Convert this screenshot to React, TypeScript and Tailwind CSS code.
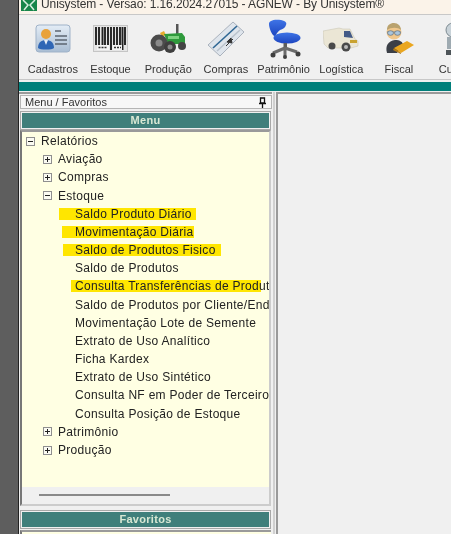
import React from "react";

const font = { fontFamily: '"Liberation Sans", Arial, sans-serif' };

const CardIcon = () => (
  <svg width="36" height="30" viewBox="0 0 36 30">
    <defs>
      <linearGradient id="card" x1="0" y1="0" x2="0" y2="1">
        <stop offset="0" stopColor="#e4edf6" />
        <stop offset="1" stopColor="#a9bdd3" />
      </linearGradient>
    </defs>
    <rect x="1" y="1" width="34" height="27" rx="3" fill="url(#card)" stroke="#9fb2c8" />
    <circle cx="11" cy="10" r="5" fill="#e9a23a" />
    <path d="M3 24c0-6 4-8 8-8s8 2 8 8c-2 2-14 2-16 0z" fill="#2f66b5" />
    <path d="M9 16l2 5 2-5z" fill="#e8eef5" />
    <path d="M20 7h6M20 12h12M20 16h12M20 20h12" stroke="#5c6672" strokeWidth="1.6" />
  </svg>
);

const BarcodeIcon = () => (
  <svg width="35" height="27" viewBox="0 0 35 27">
    <rect x="0.5" y="0.5" width="34" height="26" fill="#e5e5e5" stroke="#c5c5c5" />
    <path d="M3 2v18M6 2v18M9.5 2v23M12 2v18M15 2v18M18 2v23M21 2v18M24 2v18M27 2v18M29.500 2v23M32 2v18" stroke="#222" strokeWidth="1.9" />
    <rect x="4" y="20" width="12" height="5" fill="#f4f4f4" />
    <rect x="19.500" y="20" width="9.500" height="5" fill="#f4f4f4" />
    <path d="M5.500 22.500h9M21 22.500h7" stroke="#333" strokeWidth="1.6" strokeDasharray="2 1" />
  </svg>
);

const TractorIcon = () => (
  <svg width="36" height="30" viewBox="0 0 36 30">
    <rect x="26" y="0" width="2.500" height="11" fill="#555" />
    <path d="M10 9l4-2 2 4-4 2z" fill="#e7ad2f" />
    <path d="M14 10l18-1 3 4v7H18z" fill="#2f9a3c" />
    <path d="M18 12h11v3H18z" fill="#7ed27f" />
    <circle cx="9" cy="19" r="8.500" fill="#4b4b4b" />
    <circle cx="9" cy="19" r="3.500" fill="#8a8a8a" />
    <circle cx="20" cy="23" r="6" fill="#3e3e3e" />
    <circle cx="20" cy="23" r="2.500" fill="#8a8a8a" />
    <circle cx="32" cy="22" r="4" fill="#444" />
  </svg>
);

const TicketIcon = () => (
  <svg width="38" height="36" viewBox="0 0 38 36">
    <path d="M1 24L26 1l11 10-24 24z" fill="#dfe5ec" stroke="#aab2bd" />
    <path d="M6 27L30 5" stroke="#2f6794" strokeWidth="1.600" />
    <path d="M10 30L33 9" stroke="#b9c2cc" strokeWidth="1.500" />
    <path d="M19 25l7-7M24 17l1 5-5-1z" fill="#333" stroke="#333" strokeWidth="1" />
  </svg>
);

const ChairIcon = () => (
  <svg width="34" height="40" viewBox="0 0 34 40">
    <defs>
      <linearGradient id="seat" x1="0" y1="0" x2="0" y2="1">
        <stop offset="0" stopColor="#3f74e6" />
        <stop offset="1" stopColor="#1c45c0" />
      </linearGradient>
    </defs>
    <path d="M2 5c0-3 4-5 12-4 5 1 6 3 5 5-1 3-3 4-6 5-3 2-4 5-5 6-3 0-6-8-6-12z" fill="url(#seat)" />
    <path d="M12 15l2 6" stroke="#3565c8" strokeWidth="3" />
    <ellipse cx="20" cy="19" rx="13.500" ry="5.500" fill="url(#seat)" />
    <rect x="16.500" y="24" width="3.500" height="7" fill="#5c5c5c" />
    <path d="M18 29L6 34M18 29l12 4M18 29l0 8" stroke="#6b6b6b" strokeWidth="3" />
    <circle cx="6" cy="36" r="2.500" fill="#3f3f3f" />
    <circle cx="18" cy="38" r="2" fill="#3f3f3f" />
    <circle cx="31" cy="35" r="2.500" fill="#3f3f3f" />
  </svg>
);

const TruckIcon = () => (
  <svg width="36" height="26" viewBox="0 0 36 26">
    <path d="M0 5l16-3 4 1 7 0 5 10 3 2v5l-7 2H5l-4-4z" fill="#ebe6d5" stroke="#c5c0ae" strokeWidth="0.500" />
    <path d="M21 5h6l3 7-9-1z" fill="#435a86" />
    <path d="M27 14h7v3h-7z" fill="#c9a22f" />
    <circle cx="9" cy="20" r="3.500" fill="#4a4a4a" />
    <circle cx="23" cy="21" r="4.500" fill="#4a4a4a" />
    <circle cx="23" cy="21" r="2" fill="#bbb" />
  </svg>
);

const FiscalIcon = () => (
  <svg width="30" height="31" viewBox="0 0 30 31">
    <path d="M3 30c-2-7 1-12 8-13 5 0 8 2 8 5l-6 8z" fill="#3b3f47" />
    <circle cx="10" cy="9" r="7.500" fill="#f0c78c" />
    <path d="M3 7c0-5 3-7 7-7s7 3 7 7c-3-3-10-3-14 0z" fill="#b9a26e" />
    <path d="M3 9h14" stroke="#7d8d9c" strokeWidth="1" />
    <ellipse cx="6.500" cy="10" rx="3" ry="2.300" fill="#a9c5dc" stroke="#55606b" strokeWidth="0.600" />
    <ellipse cx="13.500" cy="10" rx="3" ry="2.300" fill="#a9c5dc" stroke="#55606b" strokeWidth="0.600" />
    <path d="M10 25l13-7 7 4-13 8z" fill="#eaa61f" />
    <path d="M10 25l7 5 0 1-8-4z" fill="#b27a15" />
  </svg>
);

const RobotIcon = () => (
  <svg width="30" height="36" viewBox="0 0 30 36">
    <circle cx="10" cy="9" r="7" fill="#c8d2d8" stroke="#7d8a91" />
    <rect x="4" y="16" width="12" height="12" fill="#9eaab1" />
    <rect x="3" y="29" width="14" height="5" fill="#4d5458" />
  </svg>
);

const TitleIcon = () => (
  <svg width="16" height="11" viewBox="0 0 16 11" className="shrink-0">
    <rect width="16" height="11" fill="#17864a" />
    <path d="M2 0l5 5-4 5M14 0L9 5l4 5" fill="none" stroke="#d9efe0" strokeWidth="1.500" />
  </svg>
);

const toolbar = [
  { label: "Cadastros", icon: <CardIcon /> },
  { label: "Estoque", icon: <BarcodeIcon /> },
  { label: "Produção", icon: <TractorIcon /> },
  { label: "Compras", icon: <TicketIcon /> },
  { label: "Patrimônio", icon: <ChairIcon /> },
  { label: "Logística", icon: <TruckIcon /> },
  { label: "Fiscal", icon: <FiscalIcon /> },
];

const Expander = ({ open }: { open?: boolean }) => (
  <span className="relative block w-[9px] h-[9px] shrink-0 border border-[#8f8f8f] bg-[#fbfbf2]">
    <span className="absolute left-[1px] top-[3px] w-[5px] h-[1px] bg-[#222]" />
    {!open && <span className="absolute left-[3px] top-[1px] w-[1px] h-[5px] bg-[#222]" />}
  </span>
);

const Branch = ({ label, open, root }: { label: string; open?: boolean; root?: boolean }) => (
  <div className={`flex items-center h-[18.18px] gap-[6px] ${root ? "pl-[4px]" : "pl-[21px]"}`}>
    <Expander open={open} />
    <span className="whitespace-nowrap">{label}</span>
  </div>
);

// mark = left edge of the hand-drawn yellow stroke, width includes the text
const Leaf = ({ label, mark, markEnd }: { label: string; mark?: number; markEnd?: number }) => (
  <div className="relative flex items-center h-[18.18px] pl-[53px] whitespace-nowrap overflow-hidden">
    {mark !== undefined && markEnd !== undefined && (
      <span
        className="absolute top-[3px] h-[12px] bg-[#ffe600]"
        style={{ left: mark - 22, width: markEnd - mark }}
      />
    )}
    <span className="relative">{label}</span>
  </div>
);

const TealBar = ({ label }: { label: string }) => (
  <div className="border border-[#a8a8a8] p-[1px] bg-[#f0f0f0]">
    <div className="h-[15px] bg-[#3f7f7b] flex items-center justify-center text-[11px] font-bold text-[#d9e8d4] tracking-[0.3px]">
      {label}
    </div>
  </div>
);

export default function App() {
  return (
    <div className="flex w-[451px] h-[534px] overflow-hidden bg-[#f0f0f0] text-[#222] blur-[0.35px]" style={font}>
      <div className="w-[18px] shrink-0 bg-[#5e5e5e]" />
      <div className="w-[1px] shrink-0 bg-[#222]" />
      <div className="flex-1 min-w-0 flex flex-col">
        <div className="h-[14px] shrink-0 bg-[#fbf3e9] flex items-start gap-[4px] pl-[2px] overflow-hidden">
          <TitleIcon />
          <span className="text-[12px] leading-[12px] -mt-[2px] tracking-[-0.1px] whitespace-nowrap text-[#333]">
            Unisystem - Versão: 1.16.2024.27015 - AGNEW - By Unisystem®
          </span>
        </div>
        <div className="h-[1px] shrink-0 bg-[#c8c8c8]" />
        <div className="h-[64px] shrink-0 flex pl-[5px] overflow-hidden">
          {toolbar.map((item) => (
            <div key={item.label} className="w-[57.7px] shrink-0 flex flex-col items-center">
              <div className="h-[44px] pt-[3px] flex items-center justify-center">{item.icon}</div>
              <span className="text-[11px] leading-[14px] mt-[3px] whitespace-nowrap text-[#333]">{item.label}</span>
            </div>
          ))}
          <div className="shrink-0 flex flex-col items-start pl-[11px]">
            <div className="h-[44px] pt-[3px] pl-[4px] flex items-center">
              <RobotIcon />
            </div>
            <span className="text-[11px] leading-[14px] mt-[3px] text-[#333]">Cu</span>
          </div>
        </div>
        <div className="h-[1px] shrink-0 bg-[#c8c8c8]" />
        <div className="h-[2px] shrink-0" />
        <div className="h-[9px] shrink-0 bg-[#007f7a]" />
        <div className="flex-1 min-h-0 flex pt-[1px] gap-[2px]">
          <div className="w-[253px] shrink-0 flex flex-col border-t-2 border-[#9a9a9a] pl-[1px]">
            <div className="h-[14px] shrink-0 mt-[1px] flex items-center justify-between border border-[#b5b5b5] bg-[#f7f7f7] px-[4px] text-[11px] text-[#333]">
              <span>Menu / Favoritos</span>
              <svg width="9" height="11" viewBox="0 0 9 11">
                <path d="M2.500 1h4v5h-4zM1 6.500h7M4.500 7v4" fill="none" stroke="#111" strokeWidth="1.300" />
              </svg>
            </div>
            <div className="mt-[2px] w-[251px]">
              <TealBar label="Menu" />
            </div>
            <div className="w-[251px] h-[376px] shrink-0 flex flex-col border-2 border-t-[#9a9a9a] border-l-[#777] border-r-[#ccc] border-b-[#ccc]">
              <div className="flex-1 bg-[#ffffe3] text-[12px] tracking-[0.3px] overflow-hidden">
                <Branch label="Relatórios" open root />
                <Branch label="Aviação" />
                <Branch label="Compras" />
                <Branch label="Estoque" open />
                <Leaf label="Saldo Produto Diário" mark={59} markEnd={196} />
                <Leaf label="Movimentação Diária" mark={62} markEnd={194} />
                <Leaf label="Saldo de Produtos Fisico" mark={63} markEnd={221} />
                <Leaf label="Saldo de Produtos" />
                <Leaf label="Consulta Transferências de Produtos" mark={71} markEnd={261} />
                <Leaf label="Saldo de Produtos por Cliente/Endereço" />
                <Leaf label="Movimentação Lote de Semente" />
                <Leaf label="Extrato de Uso Analítico" />
                <Leaf label="Ficha Kardex" />
                <Leaf label="Extrato de Uso Sintético" />
                <Leaf label="Consulta NF em Poder de Terceiros" />
                <Leaf label="Consulta Posição de Estoque" />
                <Branch label="Patrimônio" />
                <Branch label="Produção" />
              </div>
              <div className="h-[17px] shrink-0 pl-[17px] pt-[7px]">
                <div className="w-[131px] h-[2px] bg-[#8a8a8a]" />
              </div>
            </div>
            <div className="mt-[4px] w-[251px]">
              <TealBar label="Favoritos" />
            </div>
            <div className="mt-[1px] w-[251px] flex-1 bg-[#ffffe3] border-t-2 border-l-2 border-t-[#9a9a9a] border-l-[#777]" />
          </div>
          <div className="w-[2px] shrink-0 bg-[#d0d0d0] -ml-[1px]" />
          <div className="flex-1 border-l-2 border-t-2 border-[#9a9a9a] bg-[#f0f0f0] -ml-[1px]" />
        </div>
      </div>
    </div>
  );
}
